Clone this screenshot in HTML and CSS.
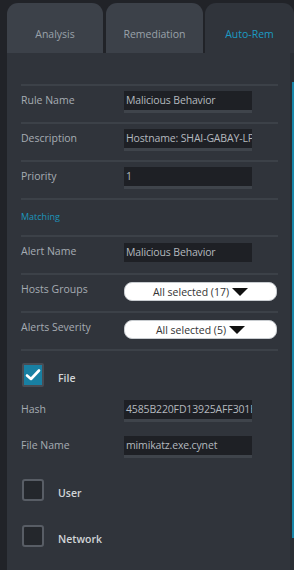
FILE: index.html
```html
<!DOCTYPE html>
<html>
<head>
<meta charset="utf-8">
<link rel="stylesheet" href="styles.css">
</head>
<body>
<div class="app">
  <div class="tabs">
    <div class="tab t1">Analysis</div>
    <div class="tab t2">Remediation</div>
    <div class="tab t3 active">Auto-Rem</div>
  </div>
  <div class="panel">
    <div class="row">
      <div class="label">Rule Name</div>
      <div class="input">Malicious Behavior</div>
    </div>
    <div class="row">
      <div class="label">Description</div>
      <div class="input">Hostname: SHAI-GABAY-LP</div>
    </div>
    <div class="row">
      <div class="label">Priority</div>
      <div class="input">1</div>
    </div>
    <div class="row section">
      <div class="section-title">Matching</div>
    </div>
    <div class="row">
      <div class="label">Alert Name</div>
      <div class="input flat">Malicious Behavior</div>
    </div>
    <div class="row">
      <div class="label">Hosts Groups</div>
      <div class="select">All selected (17)<span class="caret"></span></div>
    </div>
    <div class="row">
      <div class="label">Alerts Severity</div>
      <div class="select">All selected (5)<span class="caret"></span></div>
    </div>
    <div class="row last"></div>
    <div class="check-row first">
      <div class="checkbox checked">
        <svg width="16" height="14" viewBox="0 0 16 14"><path d="M2 7.5 L6 11 L14 2.5" fill="none" stroke="#ffffff" stroke-width="2.6" stroke-linecap="round" stroke-linejoin="round"/></svg>
      </div>
      <div class="check-label">File</div>
    </div>
    <div class="sub-row hash">
      <div class="label">Hash</div>
      <div class="input">4585B220FD13925AFF301E</div>
    </div>
    <div class="sub-row">
      <div class="label">File Name</div>
      <div class="input">mimikatz.exe.cynet</div>
    </div>
    <div class="check-row user">
      <div class="checkbox"></div>
      <div class="check-label">User</div>
    </div>
    <div class="check-row">
      <div class="checkbox"></div>
      <div class="check-label">Network</div>
    </div>
  </div>
  <div class="scroll-track"><div class="scroll-thumb"></div></div>
</div>
</body>
</html>
```
FILE: styles.css
```css
html, body {
  margin: 0;
  padding: 0;
  background: #212328;
  width: 294px;
  height: 570px;
  overflow: hidden;
  font-family: "Open Sans", "Liberation Sans", sans-serif;
}
.app {
  position: relative;
  width: 294px;
  height: 570px;
  padding-top: 3px;
  padding-left: 7px;
  box-sizing: border-box;
  display: flex;
  flex-direction: column;
}
.tabs {
  display: flex;
  height: 50px;
  gap: 3px;
}
.tab {
  background: #3c4149;
  border-radius: 11px 11px 0 0;
  color: #9aa1a9;
  font-size: 10.5px;
  display: flex;
  align-items: center;
  justify-content: center;
  padding-top: 12px;
  box-sizing: border-box;
}
.t1 { width: 96px; }
.t2 { width: 97px; }
.t3 { flex: 1; margin-left: -1px; }
.tab.active {
  background: #30343b;
  color: #1c9ac2;
}
.panel {
  flex: 1;
  background: #30343b;
  padding: 31px 0 0 14px;
}
.row {
  width: 257px;
  border-top: 2px solid #3c4148;
  height: 36px;
  box-sizing: content-box;
  display: flex;
  align-items: flex-start;
}
.row .label { margin-top: 5px; }
.row .input { margin-top: 5px; }
.row .select { margin-top: 7px; }
.row.section { height: 35px; }
.row.last { height: 0; }
.label {
  width: 103px;
  flex: none;
  color: #a6acb3;
  font-size: 10.5px;
  line-height: 19px;
}
.input {
  width: 126px;
  height: 19px;
  background: #1e2025;
  border-bottom: 3px solid #3f444b;
  color: #b4b9bf;
  font-size: 10.5px;
  letter-spacing: -0.15px;
  line-height: 18px;
  padding-left: 2px;
  white-space: nowrap;
  overflow: hidden;
  box-sizing: content-box;
}
.input.flat { border-bottom: 0; margin-top: 6px; }
.section-title {
  color: #1c94bb;
  font-size: 9px;
  margin-top: 10px;
  line-height: 14px;
}
.select {
  width: 151px;
  height: 17px;
  background: #ffffff;
  border: 1px solid #c8ccd0;
  border-radius: 8px;
  color: #333333;
  font-size: 10.5px;
  display: flex;
  align-items: center;
  justify-content: center;
  gap: 3px;
}
.caret {
  width: 0;
  height: 0;
  border-left: 8px solid transparent;
  border-right: 8px solid transparent;
  border-top: 8px solid #111111;
}
.check-row {
  display: flex;
  align-items: center;
  height: 22px;
  padding-left: 1px;
}
.check-row.first { margin-top: 12px; height: 24px; }
.check-row.user { margin-top: 21px; }
.check-row + .check-row { margin-top: 24px; }
.checkbox {
  width: 18px;
  height: 18px;
  border: 2px solid #585d65;
  border-radius: 3px;
  background: #24272c;
  flex: none;
  display: flex;
  align-items: center;
  justify-content: center;
}
.check-row.first .checkbox { height: 20px; }
.checkbox.checked {
  background: #1880a3;
  border-color: #474c54;
  border-radius: 2px;
}
.check-label {
  margin-left: 14px;
  color: #d2d5d8;
  font-size: 10.5px;
  font-weight: 600;
  padding-top: 6px;
}
.sub-row {
  display: flex;
  align-items: flex-start;
  margin-top: 13px;
}
.sub-row + .sub-row { margin-top: 14px; }
.scroll-track {
  position: absolute;
  right: 0;
  top: 53px;
  bottom: 0;
  width: 4px;
  background: #2a2e34;
}
.scroll-thumb {
  position: absolute;
  right: 0;
  top: 29px;
  height: 456px;
  width: 2px;
  background: #1685a8;
}
```
